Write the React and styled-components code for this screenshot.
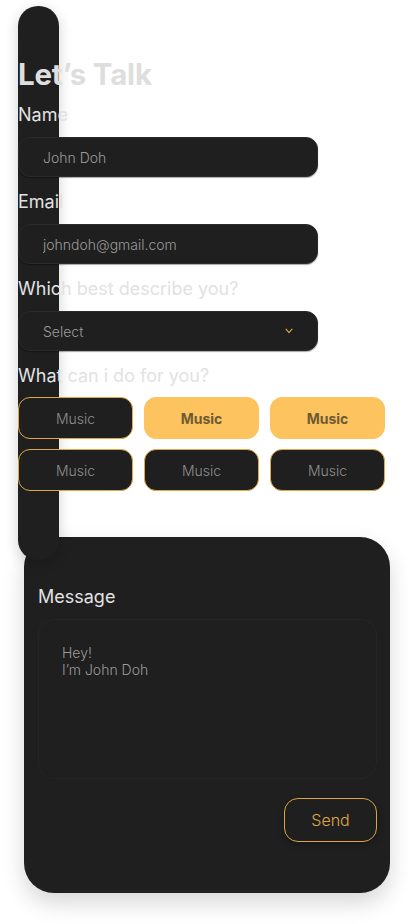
import React from 'react';
import styled, { createGlobalStyle } from 'styled-components';

const GlobalStyle = createGlobalStyle`
  * {
    box-sizing: border-box;
  }
  body {
    margin: 0;
    background: #ffffff;
    font-family: Inter, 'Liberation Sans', sans-serif;
  }
`;

const Page = styled.div`
  display: flex;
  flex-direction: column;
  align-items: flex-start;
  padding-top: 6px;
  width: 408px;
  min-height: 924px;
`;

const FormPanel = styled.form`
  position: relative;
  z-index: 2;
  width: 41px;
  height: 554px;
  margin-left: 18px;
  padding-top: 51px;
  border-radius: 20px;
  background: #1f1f1f;
  box-shadow: 0 4px 14px rgba(0, 0, 0, 0.18);
  display: flex;
  flex-direction: column;
  color: #e0e0e0;
`;

const Title = styled.h1`
  margin: 0 0 13px;
  font-size: 29.5px;
  line-height: 34px;
  font-weight: 700;
  letter-spacing: -0.2px;
  white-space: nowrap;
  color: #dedede;
`;

const Field = styled.div`
  display: flex;
  flex-direction: column;
  gap: ${(p) => p.$gap || 11}px;
  margin-bottom: 14px;
`;

const Label = styled.label`
  font-size: 18px;
  line-height: 22px;
  font-weight: 400;
  white-space: nowrap;
  color: #e2e2e2;
`;

const TextInput = styled.input`
  width: 300px;
  height: 40px;
  padding: 0 24px;
  border: 1px solid #2a2a2a;
  border-radius: 12px;
  background: #1f1f1f;
  font-family: inherit;
  font-size: 14px;
  font-weight: 300;
  color: #9c9c9c;
  outline: none;
  box-shadow: 0 1px 1px rgba(0, 0, 0, 0.35);
  &::placeholder {
    color: #9c9c9c;
  }
`;

const SelectBox = styled.div`
  width: 300px;
  height: 40px;
  padding: 0 24px 0 24px;
  border: 1px solid #2a2a2a;
  border-radius: 12px;
  background: #1f1f1f;
  display: flex;
  align-items: center;
  justify-content: space-between;
  font-size: 14px;
  font-weight: 300;
  color: #9c9c9c;
  box-shadow: 0 1px 1px rgba(0, 0, 0, 0.35);
`;

const ChoiceGrid = styled.div`
  display: grid;
  grid-template-columns: repeat(3, 115px);
  column-gap: 11px;
  row-gap: 10px;
  width: 367px;
`;

const Choice = styled.button`
  height: 42px;
  border-radius: 12px;
  font-family: inherit;
  font-size: 14px;
  cursor: pointer;
  border: 1px solid ${(p) => (p.$active ? '#fdc35f' : '#e1a944')};
  background: ${(p) => (p.$active ? '#fdc35f' : '#1f1f1f')};
  color: ${(p) => (p.$active ? '#6d5a34' : '#8e8e8e')};
  font-weight: ${(p) => (p.$active ? 700 : 300)};
`;

const MessageCard = styled.section`
  position: relative;
  z-index: 1;
  width: 366px;
  height: 356px;
  margin: -23px 0 0 24px;
  padding: 49px 13px 0 14px;
  border-radius: 30px;
  background: #1f1f1f;
  box-shadow: 0 10px 22px rgba(0, 0, 0, 0.16);
  display: flex;
  flex-direction: column;
`;

const MessageArea = styled.textarea`
  width: 100%;
  height: 160px;
  padding: 24px 23px;
  border: 1px solid #252525;
  border-radius: 16px;
  background: #1f1f1f;
  font-family: inherit;
  font-size: 14px;
  font-weight: 300;
  line-height: 17px;
  color: #9a9a9a;
  resize: none;
  outline: none;
`;

const ActionRow = styled.div`
  display: flex;
  justify-content: flex-end;
  margin-top: 5px;
`;

const SendButton = styled.button`
  width: 93px;
  height: 44px;
  border: 1px solid #dca443;
  border-radius: 14px;
  background: transparent;
  font-family: Inter, 'Liberation Sans', sans-serif;
  font-size: 16px;
  font-weight: 300;
  color: #e0a844;
  box-shadow: 0 2px 6px rgba(0, 0, 0, 0.25);
  cursor: pointer;
`;

const Chevron = () => (
  <svg width="8" height="6" viewBox="0 0 8 6" fill="none">
    <path d="M1 1.2 L4 4.6 L7 1.2" stroke="#e0a844" strokeWidth="1.1" strokeLinecap="round" strokeLinejoin="round" />
  </svg>
);

const choices = [
  { label: 'Music', active: false },
  { label: 'Music', active: true },
  { label: 'Music', active: true },
  { label: 'Music', active: false },
  { label: 'Music', active: false },
  { label: 'Music', active: false },
];

export default function App() {
  return (
    <Page>
      <GlobalStyle />
      <FormPanel onSubmit={(e) => e.preventDefault()}>
        <Title>Let’s Talk</Title>
        <Field>
          <Label>Name</Label>
          <TextInput placeholder='John Doh' />
        </Field>
        <Field>
          <Label>Email</Label>
          <TextInput placeholder='johndoh@gmail.com' />
        </Field>
        <Field>
          <Label>Which best describe you?</Label>
          <SelectBox>
            <span>Select</span>
            <Chevron />
          </SelectBox>
        </Field>
        <Field $gap={10}>
          <Label>What can i do for you?</Label>
          <ChoiceGrid>
            {choices.map((c, i) => (
              <Choice key={i} type='button' $active={c.active}>
                {c.label}
              </Choice>
            ))}
          </ChoiceGrid>
        </Field>
      </FormPanel>
      <MessageCard>
        <Field>
          <Label>Message</Label>
          <MessageArea readOnly defaultValue={'Hey!\nI’m John Doh'} />
        </Field>
        <ActionRow>
          <SendButton type='button'>Send</SendButton>
        </ActionRow>
      </MessageCard>
    </Page>
  );
}
